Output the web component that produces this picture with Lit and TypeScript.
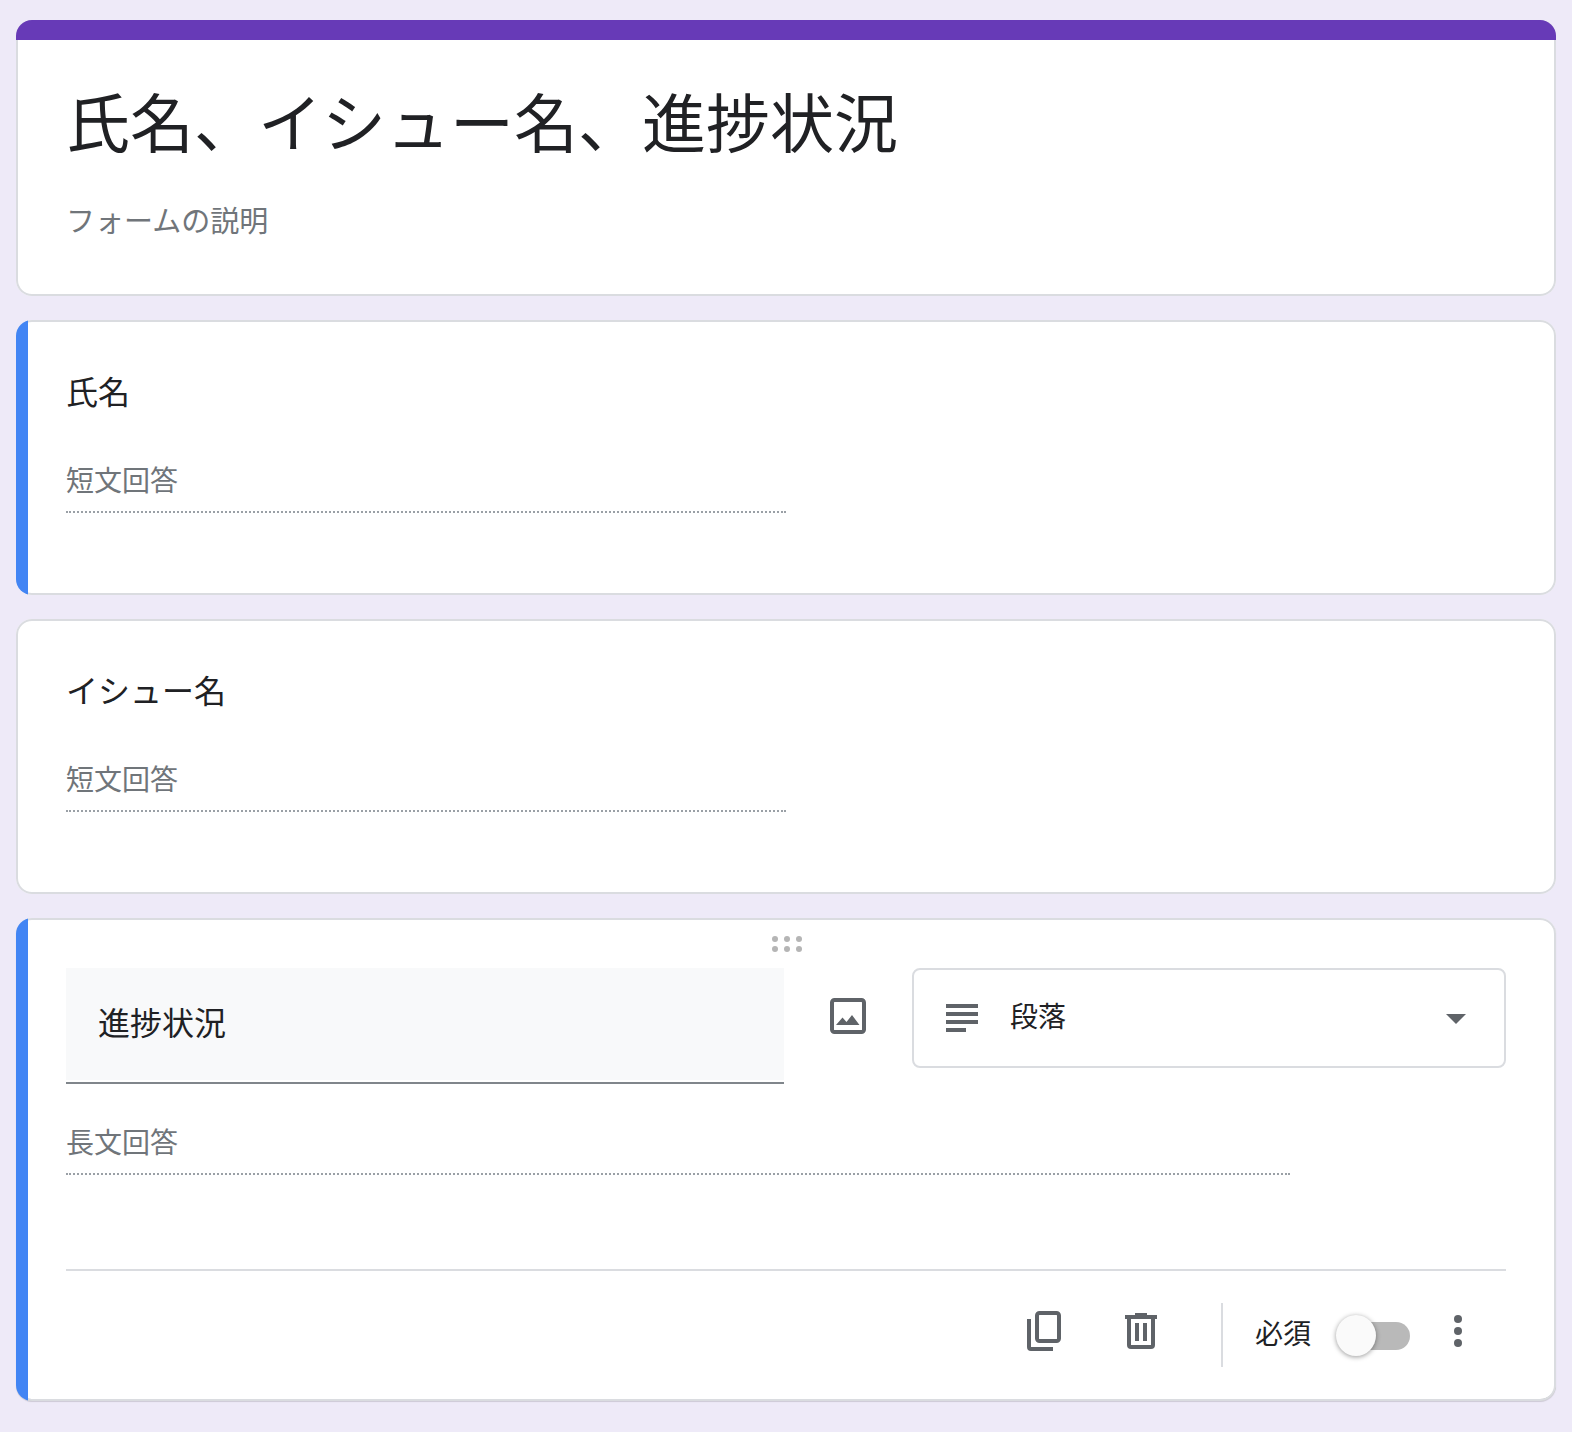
import { LitElement, html, css } from "lit";
import { customElement } from "lit/decorators.js";

@customElement("app-root")
export class AppRoot extends LitElement {
  static styles = css`
    :host {
      display: block;
      min-height: 1432px;
      box-sizing: border-box;
      background: #eeeaf8;
      padding: 20px 16px 0;
      font-family: "Noto Sans CJK JP", "Liberation Sans", sans-serif;
      color: #202124;
    }
    .stack { display: flex; flex-direction: column; gap: 24px; }
    .card {
      display: flex;
      width: 1540px;
      border-radius: 16px;
      overflow: hidden;
      background: #fff;
      box-shadow: inset 0 0 0 2px #dadce0;
      box-sizing: border-box;
    }
    .head { flex-direction: column; height: 276px; }
    .topbar { height: 20px; background: #673ab7; flex: none; }
    .head-body { padding: 39px 50px 0; }
    .title { font-size: 64px; line-height: 80px; height: 80px; }
    .desc { font-size: 29px; line-height: 40px; margin-top: 40px; color: #70757a; }
    .accent { width: 12px; flex: none; background: #4285f4; }
    .spacer { width: 12px; flex: none; }
    .q { height: 275px; }
    .q3 { height: 275px; }
    .body { padding: 50px 0 0 38px; flex: 1; }
    .q-title { font-size: 32px; line-height: 40px; }
    .ans {
      font-size: 28px; line-height: 40px; margin-top: 49px; color: #70757a;
      width: 720px; height: 54px; box-sizing: border-box;
      border-bottom: 2px dotted #9aa0a6;
    }
    .active { height: 483px; box-shadow: inset 0 0 0 2px #dadce0, inset 0 -2px 0 #b4b4b6, 0 1px 1px rgba(0,0,0,.14); }
    .active-body { flex: 1; padding: 18px 50px 0 38px; min-width: 0; }
    .drag { display: grid; grid-template-columns: repeat(3, 6px); gap: 4px 6px; margin-left: 706px; height: 16px; margin-bottom: 16px; }
    .drag i { width: 6px; height: 6px; border-radius: 50%; background: #b5b5b5; display: block; }
    .row { display: flex; align-items: flex-start; }
    .qinput {
      width: 718px; height: 112px; background: #f8f9fa;
      font-size: 32px; line-height: 106px; text-indent: 32px;
      margin-bottom: 2px;
    }
    .qline { width: 718px; height: 2px; background: #80868b; }
    .imgbtn { width: 36px; height: 36px; margin: 30px 46px 0 46px; flex: none; display: block; }
    .select {
      flex: 1; height: 100px; box-sizing: border-box; border: 2px solid #dadce0; border-radius: 8px;
      display: flex; align-items: center; padding: 0 38px 0 32px; font-size: 28px;
    }
    .select svg.lines { width: 32px; height: 28px; flex: none; margin-right: 32px; margin-top: -1px; }
    .select span { flex: 1; line-height: 40px; margin-top: -7px; }
    .select svg.arrow { width: 20px; height: 10px; flex: none; margin-top: 1px; }
    .long {
      font-size: 28px; line-height: 40px; color: #70757a; margin-top: 37px;
      width: 1224px; height: 54px; box-sizing: border-box;
      border-bottom: 2px dotted #9aa0a6;
    }
    .rule { height: 2px; background: #dadce0; margin-top: 94px; }
    .foot { display: flex; align-items: center; justify-content: flex-end; height: 64px; margin-top: 32px; padding-right: 44px; }
    .foot svg { display: block; flex: none; }
    .copy { width: 34px; height: 40px; margin-right: 64px; margin-top: -8px; }
    .trash { width: 32px; height: 36px; margin-right: 64px; margin-top: -8px; }
    .vr { width: 2px; height: 64px; background: #dadce0; margin-right: 32px; }
    .req { font-size: 28px; line-height: 40px; margin-right: 25px; margin-top: -6px; }
    .toggle { width: 74px; height: 42px; display: flex; align-items: center; margin-right: 44px; margin-top: 2px; position: relative; }
    .track { margin-left: 6px; width: 68px; height: 28px; border-radius: 14px; background: #b9b9b9; }
    .knob { position: absolute; left: 0; top: 0; width: 40px; height: 41px; border-radius: 50%; background: #fafafa; box-shadow: 0 1px 5px rgba(0,0,0,.4); }
    .more { width: 8px; height: 32px; margin-top: -8px; }
  `;

  render() {
    return html`
      <div class="stack">
        <section class="card head">
          <div class="topbar"></div>
          <div class="head-body">
            <div class="title">氏名、イシュー名、進捗状況</div>
            <div class="desc">フォームの説明</div>
          </div>
        </section>
        <section class="card q">
          <div class="accent"></div>
          <div class="body">
            <div class="q-title">氏名</div>
            <div class="ans">短文回答</div>
          </div>
        </section>
        <section class="card q3">
          <div class="spacer"></div>
          <div class="body">
            <div class="q-title">イシュー名</div>
            <div class="ans">短文回答</div>
          </div>
        </section>
        <section class="card active">
          <div class="accent"></div>
          <div class="active-body">
            <div class="drag"><i></i><i></i><i></i><i></i><i></i><i></i></div>
            <div class="row">
              <div>
                <div class="qinput">進捗状況</div>
                <div class="qline"></div>
              </div>
              <svg class="imgbtn" viewBox="0 0 36 36">
                <rect x="2" y="2" width="32" height="32" rx="2.5" fill="none" stroke="#5f6368" stroke-width="4"/>
                <path d="M6 27 L12.5 19.5 L16.5 24 L22 17 L29.5 27 Z" fill="#5f6368"/>
              </svg>
              <div class="select">
                <svg class="lines" viewBox="0 0 32 28">
                  <path d="M0 0h32v4H0zM0 8h32v4H0zM0 16h32v4H0zM0 24h20v4H0z" fill="#5f6368"/>
                </svg>
                <span>段落</span>
                <svg class="arrow" viewBox="0 0 20 10"><path d="M0 0h20L10 10z" fill="#5f6368"/></svg>
              </div>
            </div>
            <div class="long">長文回答</div>
            <div class="rule"></div>
            <div class="foot">
              <svg class="copy" viewBox="0 0 34 40">
                <rect x="10" y="2" width="22" height="28" rx="2.500" fill="none" stroke="#5f6368" stroke-width="4"/>
                <path d="M2 8v28a2 2 0 0 0 2 2h22" fill="none" stroke="#5f6368" stroke-width="4"/>
              </svg>
              <svg class="trash" viewBox="0 0 32 36">
                <path d="M10 0h12v2h10v4H0V2h10z" fill="#5f6368"/>
                <path d="M4 6v26a2 2 0 0 0 2 2h20a2 2 0 0 0 2-2V6" fill="none" stroke="#5f6368" stroke-width="4"/>
                <path d="M10 10h4v18h-4zM18 10h4v18h-4z" fill="#5f6368"/>
              </svg>
              <div class="vr"></div>
              <div class="req">必須</div>
              <div class="toggle"><div class="track"></div><div class="knob"></div></div>
              <svg class="more" viewBox="0 0 8 32">
                <circle cx="4" cy="4" r="4" fill="#5f6368"/><circle cx="4" cy="16" r="4" fill="#5f6368"/><circle cx="4" cy="28" r="4" fill="#5f6368"/>
              </svg>
            </div>
          </div>
        </section>
      </div>
    `;
  }
}
